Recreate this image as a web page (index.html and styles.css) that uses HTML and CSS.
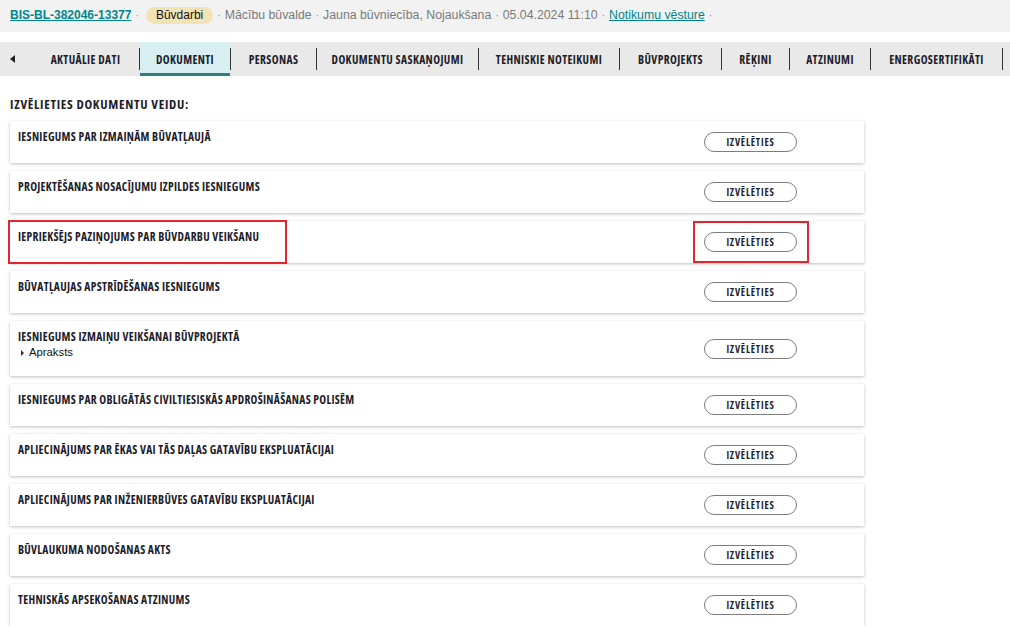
FILE: index.html
```html
<!DOCTYPE html>
<html lang="lv">
<head>
<meta charset="utf-8">
<title>Dokumenti</title>
<link rel="stylesheet" href="styles.css">
</head>
<body>
<div class="header">
  <a class="case-id" href="#">BIS-BL-382046-13377</a>
  <span class="dot">·</span>
  <span class="badge">Būvdarbi</span>
  <span class="dot">·</span>
  <span>Mācību būvalde</span>
  <span class="dot">·</span>
  <span>Jauna būvniecība, Nojaukšana</span>
  <span class="dot">·</span>
  <span>05.04.2024 11:10</span>
  <span class="dot">·</span>
  <a class="link" href="#">Notikumu vēsture</a>
  <span class="dot">·</span>
</div>

<nav class="tabs">
  <span class="arrow"></span>
  <a class="tab" href="#">AKTUĀLIE DATI</a><span class="sep"></span>
  <a class="tab active" href="#">DOKUMENTI</a><span class="sep"></span>
  <a class="tab" href="#">PERSONAS</a><span class="sep"></span>
  <a class="tab" href="#">DOKUMENTU SASKAŅOJUMI</a><span class="sep"></span>
  <a class="tab" href="#">TEHNISKIE NOTEIKUMI</a><span class="sep"></span>
  <a class="tab" href="#">BŪVPROJEKTS</a><span class="sep"></span>
  <a class="tab" href="#">RĒĶINI</a><span class="sep"></span>
  <a class="tab" href="#">ATZINUMI</a><span class="sep"></span>
  <a class="tab" href="#">ENERGOSERTIFIKĀTI</a><span class="sep"></span>
</nav>

<main class="content">
  <h2 class="title">IZVĒLIETIES DOKUMENTU VEIDU:</h2>
  <div class="list">
    <div class="card"><div class="name">IESNIEGUMS PAR IZMAIŅĀM BŪVATĻAUJĀ</div><button class="btn">IZVĒLĒTIES</button></div>
    <div class="card"><div class="name">PROJEKTĒŠANAS NOSACĪJUMU IZPILDES IESNIEGUMS</div><button class="btn">IZVĒLĒTIES</button></div>
    <div class="card marked"><div class="name">IEPRIEKŠĒJS PAZIŅOJUMS PAR BŪVDARBU VEIKŠANU</div><button class="btn">IZVĒLĒTIES</button><span class="mark mark-name"></span><span class="mark mark-btn"></span></div>
    <div class="card"><div class="name">BŪVATĻAUJAS APSTRĪDĒŠANAS IESNIEGUMS</div><button class="btn">IZVĒLĒTIES</button></div>
    <div class="card tall"><div class="name">IESNIEGUMS IZMAIŅU VEIKŠANAI BŪVPROJEKTĀ<div class="desc"><span class="tri"></span>Apraksts</div></div><button class="btn">IZVĒLĒTIES</button></div>
    <div class="card"><div class="name">IESNIEGUMS PAR OBLIGĀTĀS CIVILTIESISKĀS APDROŠINĀŠANAS POLISĒM</div><button class="btn">IZVĒLĒTIES</button></div>
    <div class="card"><div class="name">APLIECINĀJUMS PAR ĒKAS VAI TĀS DAĻAS GATAVĪBU EKSPLUATĀCIJAI</div><button class="btn">IZVĒLĒTIES</button></div>
    <div class="card"><div class="name">APLIECINĀJUMS PAR INŽENIERBŪVES GATAVĪBU EKSPLUATĀCIJAI</div><button class="btn">IZVĒLĒTIES</button></div>
    <div class="card"><div class="name">BŪVLAUKUMA NODOŠANAS AKTS</div><button class="btn">IZVĒLĒTIES</button></div>
    <div class="card"><div class="name">TEHNISKĀS APSEKOŠANAS ATZINUMS</div><button class="btn">IZVĒLĒTIES</button></div>
  </div>
</main>
</body>
</html>
```

FILE: styles.css
```css
* { box-sizing: border-box; }

body {
  margin: 0;
  background: #ffffff;
  font-family: "Liberation Sans", Arial, sans-serif;
  overflow: hidden;
}

.header {
  height: 32px;
  background: #f2f2f2;
  padding: 0 10px 2px;
  display: flex;
  align-items: center;
  gap: 3.7px;
  font-size: 12.3px;
  color: #7a7a7a;
}

.case-id {
  color: #00858c;
  font-weight: bold;
  font-size: 12px;
  text-decoration: underline;
}

.link {
  color: #00858c;
  text-decoration: underline;
}

.dot { color: #9a9a9a; }

.badge {
  margin-left: 3px;
  background: #f1e3b5;
  color: #111;
  font-size: 12px;
  border-radius: 9px;
  padding: 1px 10px 2px;
  line-height: 14px;
}

.tabs {
  margin-top: 10px;
  height: 34px;
  background: #e9e9e9;
  display: grid;
  grid-template-columns: 32px 107px 1px 90px 1px 85px 1px 161px 1px 140px 1px 101px 1px 67px 1px 80px 1px 131px 1px;
  align-items: stretch;
}

.arrow {
  align-self: center;
  justify-self: start;
  margin-left: 10px;
  width: 0;
  height: 0;
  border-top: 4px solid transparent;
  border-bottom: 4px solid transparent;
  border-right: 5px solid #222;
}

.tab, .title, .name, .btn {
  font-family: "Open Sans", "DejaVu Sans Condensed", sans-serif;
  font-stretch: 75%;
  font-weight: 700;
  color: #1d1d2b;
}

.tab {
  display: flex;
  align-items: center;
  justify-content: center;
  font-size: 11.5px;
  letter-spacing: 0.4px;
  text-decoration: none;
  white-space: nowrap;
  border-bottom: 3px solid transparent;
  padding-top: 3px;
}

.tab.active {
  background: #d7eff1;
  border-bottom-color: #317f80;
}

.sep {
  align-self: center;
  height: 22px;
  background: #333;
}

.content {
  padding: 0 10px;
}

.title {
  margin: 19px 0 0;
  font-size: 13px;
  line-height: 18px;
  letter-spacing: 0.7px;
}

.list {
  margin-top: 8px;
  width: 854px;
  display: flex;
  flex-direction: column;
  gap: 8px;
}

.card {
  position: relative;
  height: 42px;
  background: #fff;
  box-shadow: 0 1px 3px rgba(0, 0, 0, 0.25);
  display: flex;
  align-items: center;
  padding-right: 67px;
}

.card.tall { height: 55px; }

.name {
  flex: 1;
  align-self: flex-start;
  padding: 8px 8px 0;
  font-size: 11.5px;
  line-height: 16px;
  letter-spacing: 0.3px;
}

.desc {
  margin-top: 1px;
  display: flex;
  align-items: center;
  gap: 5px;
  padding-left: 3px;
  font-family: "Liberation Sans", Arial, sans-serif;
  font-stretch: normal;
  font-weight: normal;
  font-size: 11.3px;
  line-height: 13px;
  letter-spacing: 0;
  color: #111;
}

.tri {
  width: 0;
  height: 0;
  border-top: 3px solid transparent;
  border-bottom: 3px solid transparent;
  border-left: 3px solid #333;
}

.btn {
  width: 93px;
  height: 20px;
  background: #fff;
  border: 1px solid #7c7c7c;
  border-radius: 10px;
  padding: 0;
  font-size: 10px;
  letter-spacing: 0.8px;
  cursor: pointer;
}

.mark {
  position: absolute;
  border: 2px solid #e3262e;
  pointer-events: none;
}

.mark-name {
  left: -2px;
  top: -1px;
  width: 279px;
  height: 44px;
}

.mark-btn {
  left: 683px;
  top: 0;
  width: 116px;
  height: 42px;
}
```
